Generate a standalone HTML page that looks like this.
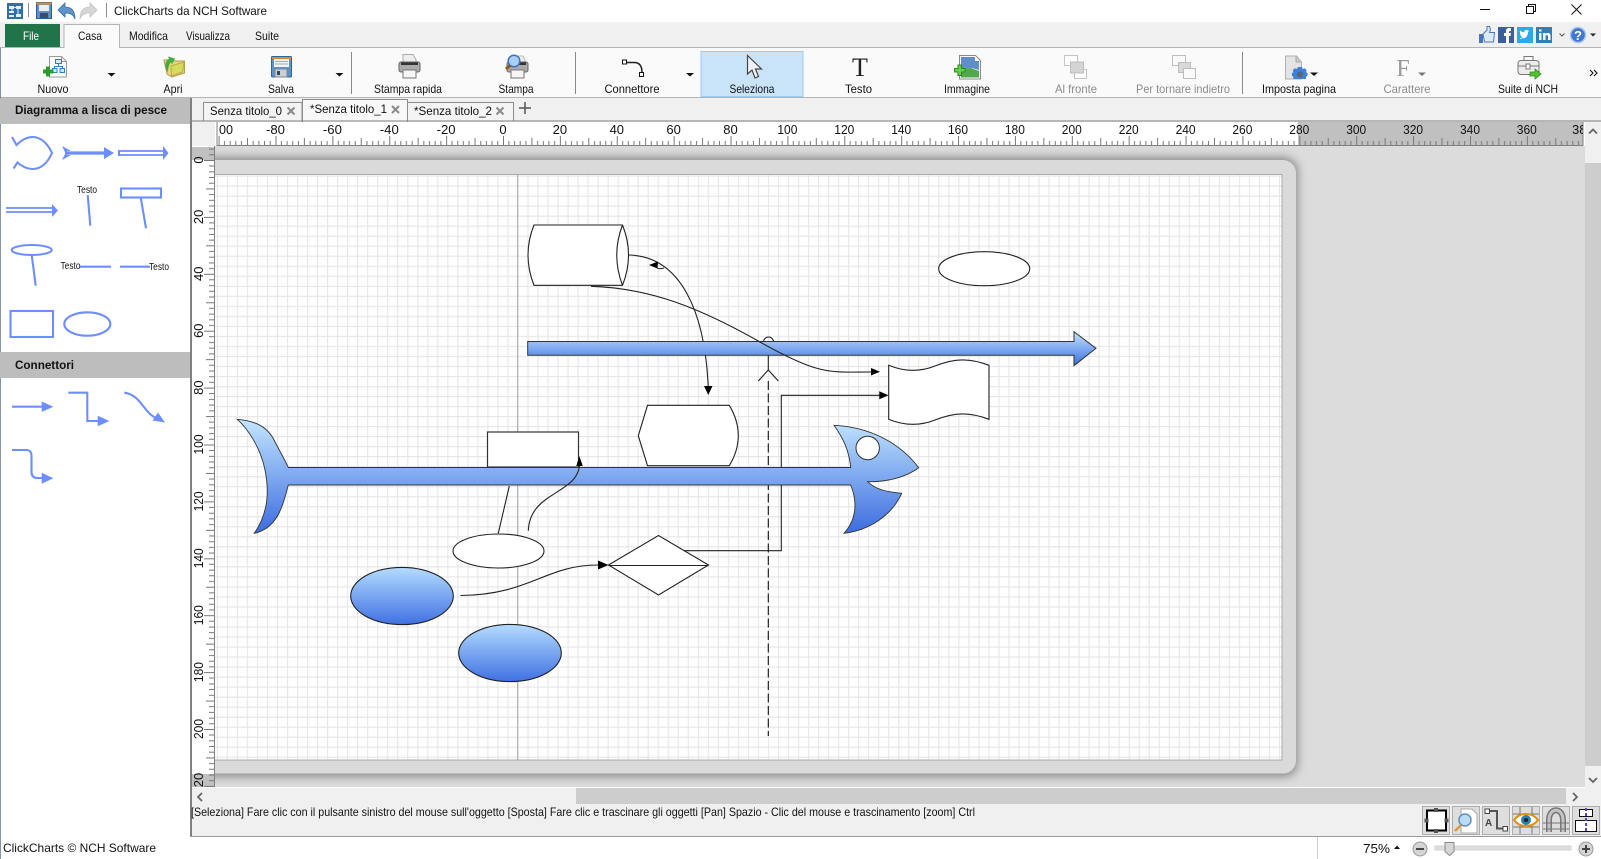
<!DOCTYPE html>
<html lang="it"><head><meta charset="utf-8"><title>ClickCharts da NCH Software</title>
<style>
html,body{margin:0;padding:0;background:#fff;overflow:hidden;width:1601px;height:859px}
svg{display:block}
text{font-family:"Liberation Sans",sans-serif;font-size:12px;fill:#111}
.d{fill:#8c8c8c}
.b{font-weight:bold}
.r{font-size:13px;fill:#111}
</style></head><body>
<svg width="1601" height="859" viewBox="0 0 1601 859" xmlns="http://www.w3.org/2000/svg">
<defs>
<linearGradient id="fg" x1="0" y1="0" x2="0" y2="1"><stop offset="0" stop-color="#c2e6ff"/><stop offset="1" stop-color="#3c6ce0"/></linearGradient>
<linearGradient id="el" x1="0" y1="0" x2="0" y2="1"><stop offset="0" stop-color="#b4dcff"/><stop offset="1" stop-color="#3f71e2"/></linearGradient>
<pattern id="grid" patternUnits="userSpaceOnUse" x="216.8" y="175.5" width="10.02" height="10.02"><path d="M.5 0V10.02M0 .5H10.02" stroke="#e7e7e7" stroke-width="1.3" fill="none"/></pattern>
<pattern id="ht" patternUnits="userSpaceOnUse" x="218.6" y="122" width="56.88" height="24"><path d="M.5 14V23M5.9 19V23M11.6 19V23M17.2 19V23M22.9 19V23M28.9 16V23M34.6 19V23M40.3 19V23M45.9 19V23M51.6 19V23" stroke="#777" fill="none"/></pattern>
<pattern id="vt" patternUnits="userSpaceOnUse" x="192" y="160" width="23" height="56.9"><path d="M12 .5H23M17 6H23M17 11.9H23M17 17.5H23M17 23.2H23M14 28.9H23M17 34.6H23M17 40.3H23M17 46H23M17 51.6H23" stroke="#777" fill="none"/></pattern>
<filter id="sh" x="-5%" y="-5%" width="110%" height="110%"><feGaussianBlur stdDeviation="4.5"/></filter>
<clipPath id="cv"><rect x="215" y="146" width="1370" height="641"/></clipPath>
<clipPath id="rl"><rect x="217" y="122" width="1366" height="24"/></clipPath>
</defs>

<!-- base -->
<rect width="1601" height="859" fill="#fff"/>
<rect y="22" width="1601" height="25" fill="#f0f0f0"/>
<rect y="47" width="1601" height="1" fill="#b4b4b4"/>
<rect y="48" width="1601" height="49" fill="#fafafa"/>
<rect y="97" width="1601" height="1" fill="#b4b4b4"/>
<rect x="0" y="48" width="1" height="811" fill="#1d3c63" opacity=".55"/>

<!-- title bar -->
<g>
<rect x="7" y="3" width="16" height="16" fill="#2f6fb0"/><path d="M9 6h5v3H9zM16 6h5v3h-5zM9 11h5v2H9zM16 14h5v3h-5zM9 15h5v2H9z" fill="#dff0ff"/><path d="M14 7.500h2M12 9v2M18 9v5" stroke="#dff0ff"/>
<rect x="28" y="3" width="1" height="14" fill="#8a8a8a"/>
<rect x="36.500" y="2.500" width="15" height="16" fill="#5e8fc4" stroke="#2d5f97"/><rect x="36.500" y="2.500" width="15" height="2" fill="#e58a2c"/><rect x="39" y="5" width="10" height="6" fill="#eee"/><rect x="40" y="13" width="8" height="5" fill="#3e4e62"/>
<path d="M58 10L65 3v4c6 0 10 3 10 12-2-5-5-6-10-6v4z" fill="#5f93cc" stroke="#3a6da6" stroke-width=".8"/>
<path d="M97 10L90 3v4c-6 0-10 3-10 12 2-5 5-6 10-6v4z" fill="#d6d6d6" stroke="#c4c4c4" stroke-width=".8"/>
<rect x="106" y="3" width="1" height="14" fill="#8a8a8a"/>
<text x="114" y="15" textLength="153" lengthAdjust="spacingAndGlyphs">ClickCharts da NCH Software</text>
<path d="M1480 9.500h10" stroke="#111"/>
<path d="M1526.500 6.500h7v7h-7zM1528.500 6.500v-2h7v7h-2" fill="none" stroke="#111"/>
<path d="M1571.500 4.500l10 10M1581.500 4.500l-10 10" stroke="#111"/>
</g>

<!-- menu row -->
<rect x="5" y="24" width="55" height="23" fill="#21744a"/>
<text x="31" y="40" text-anchor="middle" textLength="16" lengthAdjust="spacingAndGlyphs" style="fill:#fff">File</text>
<path d="M64 48V24.500H119.500V48" fill="#fafafa" stroke="#b4b4b4"/>
<text x="78" y="40" textLength="24" lengthAdjust="spacingAndGlyphs">Casa</text>
<text x="129" y="40" textLength="39" lengthAdjust="spacingAndGlyphs">Modifica</text>
<text x="186" y="40" textLength="44" lengthAdjust="spacingAndGlyphs">Visualizza</text>
<text x="255" y="40" textLength="24" lengthAdjust="spacingAndGlyphs">Suite</text>

<!-- social -->
<g>
<rect x="1479" y="34" width="4" height="9" fill="#4a76b8"/>
<path d="M1483 34l4-4v-3.500h2.500l1 3-1 3h5l-1 9.500h-9z" fill="#dbe9f8" stroke="#4c78b4"/>
<rect x="1498" y="27" width="16" height="16" fill="#3b5f9e"/><path d="M1506 43v-7h-2v-3h2v-2c0-2 1-3 3-3h2v3h-1c-1 0-1 .500-1 1v1h2l-.5 3h-1.500v7z" fill="#fff"/>
<rect x="1517" y="27" width="16" height="16" fill="#2ba9e8"/><path d="M1520 38c3 1 6 0 7-2s1-3 1-4l1.500-1.500-1.500.3c-1-1.500-4-1-4 1.500-2 0-3-1-4-2-.5 1.500 0 3 1 3.500l-1-.2c0 1.500 1 2.500 2 2.800h-1c.5 1 1 1.500 2 1.600-1 .8-2 1-3 1z" fill="#fff"/>
<rect x="1536" y="27" width="16" height="16" fill="#2f7fb8"/><path d="M1539 33h2.500v7H1539zM1539 29.500h2.500v2H1539zM1543 33h2.500v1c1-1.500 5-2 5 2v4H1548v-3.500c0-2-2.500-2-2.500 0V40H1543z" fill="#fff"/>
<path d="M1559.500 33.500l2.500 2.500 2.500-2.500" fill="none" stroke="#555"/>
<circle cx="1578" cy="35" r="7.500" fill="#3f78d0" stroke="#a9c3ea" stroke-width="1.500"/>
<text x="1578" y="40" text-anchor="middle" class="b" style="fill:#fff;font-size:13px">?</text>
<path d="M1590 33.500h6l-3 3z" fill="#222"/>
</g>

<!-- toolbar -->
<rect x="701" y="51.500" width="102" height="45" fill="#c9e3f9" stroke="#99ccf5"/>
<g fill="#111">
<path d="M107.500 73h8l-4 3.500zM335.500 73h8l-4 3.500zM686 73h8l-4 3.500zM1310 72.500h8l-4 3.500z"/>
</g>
<path d="M1418 72.500h8l-4 3.500z" fill="#777"/>
<rect x="351" y="52" width="1" height="42" fill="#8a8a8a"/>
<rect x="575" y="52" width="1" height="42" fill="#8a8a8a"/>
<rect x="1242" y="52" width="1" height="42" fill="#8a8a8a"/>

<!-- Nuovo -->
<path d="M49.500 56.500h12l5 5v15.500h-17z" fill="#fff" stroke="#9a9a9a"/><path d="M61.500 56.500v5h5" fill="none" stroke="#9a9a9a"/>
<path d="M55.500 59.500h6v4h-6zM52.500 68.500h4.500v4h-4.500zM60 68.500h4.500v4H60z" fill="#d8ebfb" stroke="#2a80c8"/><path d="M58.500 63.500v3M54.500 68.500v-2h8v2" fill="none" stroke="#2a80c8"/>
<path d="M46 66.500h4v3h3.500v4H50v3h-4v-3h-3v-4h3z" fill="#2e9a2e"/>
<!-- Apri -->
<path d="M164 60l8-.5 2 1.500h10.500v12L172 77l-5-3z" fill="#e6d67c" stroke="#b89a4c"/>
<path d="M171 66l13-4-1.500 10-11 4z" fill="#d6dc5c" stroke="#c0a850"/>
<path d="M168 72c-4-5-3-11 1-13l-1-2.500 7 2-3 6-1-2.500c-2 2-3 6-3 10z" fill="#3fae3f"/>
<!-- Salva -->
<rect x="271.500" y="56.500" width="20" height="20.500" rx="1" fill="#5f92c8" stroke="#30639c"/><rect x="272" y="57" width="19" height="2" fill="#e58a2c"/><rect x="274" y="59" width="15" height="8" fill="#f2f2f2"/><path d="M275 61.500h13M275 64h13" stroke="#aaa"/><rect x="275" y="69" width="12" height="8" fill="#c8d0d8" stroke="#7a8894"/><rect x="277" y="71" width="3" height="4" fill="#39454f"/>
<!-- Stampa rapida -->
<path d="M403 54.500h10l3 5v4h-13z" fill="#eee" stroke="#aaa"/><rect x="399" y="62" width="21" height="10" rx="2" fill="#aaa" stroke="#666"/><rect x="401" y="62.500" width="17" height="2.500" fill="#333"/><rect x="403" y="70" width="13" height="8" fill="#f6f6f6" stroke="#777"/>
<!-- Stampa -->
<path d="M512 56h11l2 5v4h-13z" fill="#efefef" stroke="#bbb"/><rect x="507" y="62" width="21" height="10" rx="2" fill="#aaa" stroke="#666"/><rect x="509" y="62.500" width="17" height="2.500" fill="#333"/><rect x="511" y="70" width="13" height="8" fill="#f6f6f6" stroke="#777"/>
<circle cx="514" cy="61" r="5.800" fill="#a9cff5" stroke="#3f74c4" stroke-width="1.500"/><path d="M510 65.500l-4 3.500" stroke="#8c5a1e" stroke-width="3"/>
<!-- Connettore -->
<path d="M627 62.500h7c6 0 8 4 8 10" fill="none" stroke="#222" stroke-width="1.500"/><rect x="622.500" y="60" width="4" height="4" fill="#fff" stroke="#111"/><rect x="639.500" y="72.500" width="4" height="4" fill="#fff" stroke="#111"/>
<!-- Seleziona -->
<path d="M747.500 55.500V74l4.500-4 3 8 3.500-1.500-3-7.500h6z" fill="#eef2f6" stroke="#444" stroke-width="1.200"/>
<!-- Testo -->
<text x="860" y="76" text-anchor="middle" style="font-family:'Liberation Serif',serif;font-size:26px;fill:#222">T</text>
<!-- Immagine -->
<path d="M959.500 55.500h16l5 5v18.500h-21z" fill="#fff" stroke="#888"/><path d="M961 57h14v4h4v9l-7-2-11 1z" fill="#5f8fc6"/><path d="M961 69l10-1 8 3v6.500h-18z" fill="#52a84c"/><path d="M958 65h3.500v3.500h3.500v3.500h-3.500v3.500H958V72h-3.500v-3.500H958z" fill="#66d24a" stroke="#2a8a1e"/>
<!-- Al fronte -->
<g fill="#fff" stroke="#c4c4c4"><rect x="1064.500" y="55.500" width="13" height="10"/><rect x="1074.500" y="69.500" width="12" height="9"/></g><rect x="1070.500" y="62" width="13" height="11" fill="#d4d4d4" stroke="#bdbdbd"/>
<!-- Per tornare indietro -->
<g fill="#fafafa" stroke="#bdbdbd"><rect x="1172.500" y="55.500" width="13" height="10"/><rect x="1178.500" y="62.500" width="12" height="10" fill="#d8d8d8"/><rect x="1183.500" y="68.500" width="12" height="10"/></g>
<!-- Imposta pagina -->
<path d="M1285.500 56h11l5 6v17h-16z" fill="#e4e4e4" stroke="#b0b0b0"/><path d="M1296 56v6h5" fill="#c8c8c8" stroke="#aaa"/>
<path d="M1298 67h4l.7 2 2-.8 2 2-.8 2 1.600.8v3l-1.600.8.300 2.200h-13l.3-2.200-1.600-.8v-3l1.600-.8-.8-2 2-2 2 .8z" fill="#3f7fd8"/><circle cx="1300" cy="74.500" r="3" fill="#5c6470"/>
<!-- Carattere -->
<text x="1403" y="76" text-anchor="middle" style="font-family:'Liberation Serif',serif;font-size:24px;fill:#999">F</text>
<!-- Suite -->
<rect x="1518" y="60.500" width="21" height="14" rx="3" fill="#ececec" stroke="#777"/><path d="M1524 60v-3.500h9V60M1518 66h21" fill="none" stroke="#777"/><rect x="1526" y="64" width="4" height="5" fill="#fff" stroke="#777"/>
<path d="M1530 72h5v-3l6 5-6 5v-3h-5z" fill="#52c22e" stroke="#2e8c1e" stroke-width=".8"/>
<path d="M1590 70l3 3-3 3M1594 70l3 3-3 3" fill="none" stroke="#111" stroke-width="1.100"/>

<!-- toolbar labels -->
<g text-anchor="middle">
<text x="53" y="93" textLength="31" lengthAdjust="spacingAndGlyphs">Nuovo</text>
<text x="173" y="93" textLength="19" lengthAdjust="spacingAndGlyphs">Apri</text>
<text x="281" y="93" textLength="26" lengthAdjust="spacingAndGlyphs">Salva</text>
<text x="408" y="93" textLength="68" lengthAdjust="spacingAndGlyphs">Stampa rapida</text>
<text x="516" y="93" textLength="35" lengthAdjust="spacingAndGlyphs">Stampa</text>
<text x="632" y="93" textLength="55" lengthAdjust="spacingAndGlyphs">Connettore</text>
<text x="752" y="93" textLength="45" lengthAdjust="spacingAndGlyphs">Seleziona</text>
<text x="858.500" y="93" textLength="27" lengthAdjust="spacingAndGlyphs">Testo</text>
<text x="967" y="93" textLength="46" lengthAdjust="spacingAndGlyphs">Immagine</text>
<text x="1076" y="93" textLength="42" lengthAdjust="spacingAndGlyphs" class="d">Al fronte</text>
<text x="1183" y="93" textLength="94" lengthAdjust="spacingAndGlyphs" class="d">Per tornare indietro</text>
<text x="1299" y="93" textLength="74" lengthAdjust="spacingAndGlyphs">Imposta pagina</text>
<text x="1407" y="93" textLength="47" lengthAdjust="spacingAndGlyphs" class="d">Carattere</text>
<text x="1528" y="93" textLength="60" lengthAdjust="spacingAndGlyphs">Suite di NCH</text>
</g>

<!-- tab strip -->
<rect x="190" y="98" width="1411" height="24" fill="#f0f0f0"/>
<path d="M203.500 121V102.500H302V121" fill="#f4f4f4" stroke="#8c8c8c"/>
<path d="M407 121V102.500H513.500V121" fill="#f4f4f4" stroke="#8c8c8c"/>
<path d="M302.500 122V99.500H407.500V122" fill="#f8f8f8" stroke="#8c8c8c"/>
<text x="210" y="115" textLength="72" lengthAdjust="spacingAndGlyphs">Senza titolo_0</text>
<text x="310" y="113" textLength="77" lengthAdjust="spacingAndGlyphs">*Senza titolo_1</text>
<text x="414" y="115" textLength="78" lengthAdjust="spacingAndGlyphs">*Senza titolo_2</text>
<path d="M287.500 107.500l7 7M294.500 107.500l-7 7M392 106l7 7M399 106l-7 7M496.500 107.500l7 7M503.500 107.500l-7 7" stroke="#8a8a8a" stroke-width="2" fill="none"/>
<path d="M525 102v12M519 108h12" stroke="#555" stroke-width="1.500"/>

<!-- left panel -->
<rect y="98" width="190" height="26" fill="#bdbdbd"/>
<text x="15" y="114" class="b" textLength="152" lengthAdjust="spacingAndGlyphs">Diagramma a lisca di pesce</text>
<rect y="352" width="190" height="26" fill="#bdbdbd"/>
<text x="15" y="369" class="b" textLength="59" lengthAdjust="spacingAndGlyphs">Connettori</text>
<rect x="190" y="98" width="2" height="738" fill="#808080"/>

<g fill="none" stroke="#6c8eff" stroke-width="2.100">
<path d="M12 137l4.500 8c5-5 10-8 16-8 8 0 15 6 19.500 16-4.500 10-11 16-19.500 16-6 0-11-3-15-6.500l-4 6"/>
<path d="M65 153h42" stroke-width="3.200"/>
<path d="M119 151h45M119 155h45" stroke-width="1.800"/><path d="M119 150v6"/>
<path d="M6 208h47M6 212h47" stroke-width="1.800"/>
<path d="M87.700 195l2.600 30.700M140.700 197.300l5.300 31"/>
<rect x="121" y="188.500" width="40" height="9"/>
<ellipse cx="31.700" cy="250" rx="20" ry="5"/><path d="M31.700 255l4 30.700"/>
<path d="M80 266.700h31M120 266.700h30"/>
<rect x="10.500" y="311" width="42.500" height="26"/>
<ellipse cx="87.300" cy="324" rx="23" ry="11.700"/>
<path d="M12 406.700h31M68.300 392.700H87.300V421H100M124.300 392.700c17 2 20 22 33 25.500M12 450h14c4 0 5.500 2 5.500 6v16c0 4 2 6 6 6H44"/>
</g>
<g fill="#6c8eff">
<path d="M62 146l3.500 7-3.500 7 9-5h-4v-4h4zM104 147l10 6-10 6zM163 146l5.500 7-5.500 7zM52 204l6 6.500-6 6.500zM41.700 401.500l11.700 5.200-11.700 5.200zM97.700 415.700l11.700 5.300-11.700 5.300zM165 422.500l-12.500-2 5.500-8zM41.700 472.800l11.700 5.500-11.700 5.500z"/>
</g>
<g>
<text x="77" y="193" textLength="20" lengthAdjust="spacingAndGlyphs" style="font-size:10px">Testo</text>
<text x="60.500" y="269" textLength="20" lengthAdjust="spacingAndGlyphs" style="font-size:10px">Testo</text>
<text x="149" y="270" textLength="20" lengthAdjust="spacingAndGlyphs" style="font-size:10px">Testo</text>
</g>

<!-- canvas -->
<rect x="215" y="146" width="1370" height="641" fill="#dcdcdc"/>
<g clip-path="url(#cv)">
<rect x="100" y="157" width="1198" height="620" rx="14" fill="#8e8e8e" filter="url(#sh)"/>
<rect x="100" y="160" width="1196" height="613.500" rx="13" fill="#dadada"/>
<rect x="100" y="174.500" width="1182" height="585.500" fill="#fff" stroke="#ababab"/>
<rect x="215" y="175" width="1066.500" height="584.500" fill="url(#grid)"/>
<path d="M517.700 175V760" stroke="#a6a6a6"/>

<!-- drawing layer below bars -->
<g fill="none" stroke="#222" stroke-width="1.100">
<path d="M534 225H622.500Q634.500 255 622.500 285.300H534Q522 255 534 225Z" fill="#fff"/>
<path d="M622.500 225Q611 255 622.500 285.300"/>
<path d="M628.300 255C680 256 705 310 708.300 388"/>
<path d="M763.500 342a5 5 0 0 1 10 0"/>
<path d="M768.300 355V370M758.300 381L768.300 370L778.300 381"/>
<path d="M768.300 381V736" stroke-dasharray="9 3.500" stroke="#111"/>
<path d="M647.500 405.300H729.300Q747.300 435.700 729.300 465.700H647.500L638.300 435.700Z" fill="#fff"/>
<path d="M888.700 365.300C905 372 920 372 935 366C955 358 970 358 989 365.300V419.300C970 412 955 412 935 420C920 426 905 426 888.700 419.300Z" fill="#fff"/>
<ellipse cx="984.200" cy="268.700" rx="45.500" ry="17" fill="#fff"/>
<path d="M509.300 486L498.300 533.300"/>
<ellipse cx="498.500" cy="551" rx="45.500" ry="17" fill="#fff"/>
<path d="M608.500 565L658.500 535.500L708.500 565L658.500 595Z" fill="#fff"/>
<path d="M608.500 565.500H708.500"/>
<path d="M683.500 550.700H781.300V395.300H880"/>
<path d="M460.500 595.500C530 595 545 565 598 565"/>
<ellipse cx="402" cy="596" rx="51.300" ry="28.600" fill="url(#el)"/>
<ellipse cx="510" cy="653" rx="51.300" ry="28.600" fill="url(#el)"/>
</g>
<path d="M704 386H712.500L708.300 395ZM879.300 391.300L888.500 395.300L879.300 399.300ZM598 560.500L608.500 565L598 569.500ZM649 265L658 261.500L657.500 268.500ZM871 368L880 371.700L871 375.500Z" fill="#000"/>
<path d="M657.500 268.500Q661 269 664 268" fill="none" stroke="#222"/>

<!-- top arrow bar -->
<path d="M527.700 341.500H1074V331.700L1096 348.300L1074 365.700V355.300H527.700Z" fill="url(#fg)" stroke="#333" stroke-width="1"/>

<!-- fish -->
<rect x="487.500" y="432" width="91" height="35" fill="#fff" stroke="#333" stroke-width="1.200"/>
<path d="M237.300 419.300C255 421 266 426 273 438C279 450 284 458 288.300 467.500H850.700C849 450 843 438 834 425.300C870 427 900 443 918.700 467.700C906 477 888 482 867.700 481.700C876 490 888 492 901.700 493.300C892 515 870 530 844 533.300C856 520 858 503 850.700 485H288.300C283 505 278 528 254.300 533.300C269 512 269 490 265 470C261 450 250 431 237.300 419.300Z" fill="url(#fg)" stroke="#333" stroke-width=".9"/>
<circle cx="867.700" cy="448" r="11.700" fill="#fff" stroke="#333"/>
<path d="M528.300 530.700C530 490 580 495 579.700 462" fill="none" stroke="#222" stroke-width="1.100"/>
<path d="M579.300 456L582.800 466H576.300Z" fill="#000"/>
<path d="M591 286.300C650 288 700 308 760 342S830 372 872 372" fill="none" stroke="#222" stroke-width="1.100"/>
</g>

<!-- rulers -->
<rect x="192" y="122" width="23" height="24" fill="#f0f0f0"/>
<rect x="217" y="122" width="1081" height="24" fill="#fff"/>
<rect x="1298" y="122" width="285" height="24" fill="#c0c0c0"/>
<rect x="217" y="122" width="1366" height="24" fill="url(#ht)"/>
<path d="M192 121H1601" stroke="#7c7c7c"/>
<path d="M217 122V146M1583 122V146M217 145.500H1583" stroke="#808080" fill="none"/>
<g clip-path="url(#rl)" text-anchor="middle">
<text x="226" y="134" class="r" textLength="14" lengthAdjust="spacingAndGlyphs">00</text>
<text x="275.500" y="134" class="r" textLength="19" lengthAdjust="spacingAndGlyphs">-80</text>
<text x="332.400" y="134" class="r" textLength="19" lengthAdjust="spacingAndGlyphs">-60</text>
<text x="389.300" y="134" class="r" textLength="19" lengthAdjust="spacingAndGlyphs">-40</text>
<text x="446.100" y="134" class="r" textLength="19" lengthAdjust="spacingAndGlyphs">-20</text>
<text x="503" y="134" class="r">0</text>
<text x="559.900" y="134" class="r">20</text>
<text x="616.800" y="134" class="r">40</text>
<text x="673.600" y="134" class="r">60</text>
<text x="730.500" y="134" class="r">80</text>
<text x="787.400" y="134" class="r" textLength="20" lengthAdjust="spacingAndGlyphs">100</text>
<text x="844.300" y="134" class="r" textLength="20" lengthAdjust="spacingAndGlyphs">120</text>
<text x="901.200" y="134" class="r" textLength="20" lengthAdjust="spacingAndGlyphs">140</text>
<text x="958" y="134" class="r" textLength="20" lengthAdjust="spacingAndGlyphs">160</text>
<text x="1014.900" y="134" class="r" textLength="20" lengthAdjust="spacingAndGlyphs">180</text>
<text x="1071.800" y="134" class="r" textLength="20" lengthAdjust="spacingAndGlyphs">200</text>
<text x="1128.700" y="134" class="r" textLength="20" lengthAdjust="spacingAndGlyphs">220</text>
<text x="1185.600" y="134" class="r" textLength="20" lengthAdjust="spacingAndGlyphs">240</text>
<text x="1242.400" y="134" class="r" textLength="20" lengthAdjust="spacingAndGlyphs">260</text>
<text x="1299.300" y="134" class="r" textLength="20" lengthAdjust="spacingAndGlyphs">280</text>
<text x="1356.200" y="134" class="r" textLength="20" lengthAdjust="spacingAndGlyphs">300</text>
<text x="1413.100" y="134" class="r" textLength="20" lengthAdjust="spacingAndGlyphs">320</text>
<text x="1470" y="134" class="r" textLength="20" lengthAdjust="spacingAndGlyphs">340</text>
<text x="1526.800" y="134" class="r" textLength="20" lengthAdjust="spacingAndGlyphs">360</text>
<text x="1572" y="134" class="r" style="text-anchor:start">38</text>
</g>

<rect x="192" y="146" width="23" height="641" fill="#fff"/>
<rect x="192" y="147" width="23" height="13" fill="#c0c0c0"/>
<rect x="192" y="774" width="23" height="13" fill="#c0c0c0"/>
<rect x="192" y="146" width="23" height="641" fill="url(#vt)"/>
<path d="M214.500 146V787" stroke="#808080"/>
<g text-anchor="middle">
<text transform="translate(203,160) rotate(-90)" class="r">0</text>
<text transform="translate(203,216.900) rotate(-90)" class="r">20</text>
<text transform="translate(203,273.800) rotate(-90)" class="r">40</text>
<text transform="translate(203,330.700) rotate(-90)" class="r">60</text>
<text transform="translate(203,387.600) rotate(-90)" class="r">80</text>
<text transform="translate(203,444.500) rotate(-90)" class="r" textLength="20" lengthAdjust="spacingAndGlyphs">100</text>
<text transform="translate(203,501.400) rotate(-90)" class="r" textLength="20" lengthAdjust="spacingAndGlyphs">120</text>
<text transform="translate(203,558.300) rotate(-90)" class="r" textLength="20" lengthAdjust="spacingAndGlyphs">140</text>
<text transform="translate(203,615.200) rotate(-90)" class="r" textLength="20" lengthAdjust="spacingAndGlyphs">160</text>
<text transform="translate(203,672.100) rotate(-90)" class="r" textLength="20" lengthAdjust="spacingAndGlyphs">180</text>
<text transform="translate(203,729) rotate(-90)" class="r" textLength="20" lengthAdjust="spacingAndGlyphs">200</text>
<text transform="translate(203,780) rotate(-90)" class="r">20</text>
</g>

<!-- vertical scrollbar -->
<rect x="1585" y="122" width="16" height="665" fill="#f0f0f0"/>
<rect x="1585" y="163" width="16" height="603" fill="#cdcdcd"/>
<path d="M1589 133.500l4-4 4 4M1589 778l4 4 4-4" fill="none" stroke="#666" stroke-width="1.800"/>

<!-- bottom area -->
<rect x="192" y="787" width="1409" height="49" fill="#f0f0f0"/>
<rect x="192" y="787" width="1393" height="1" fill="#fff"/>
<rect x="576" y="788" width="990" height="16" fill="#cdcdcd"/>
<path d="M202 793l-4 4 4 4M1573 793l4 4-4 4" fill="none" stroke="#666" stroke-width="1.800"/>
<text x="191" y="816" textLength="784" lengthAdjust="spacingAndGlyphs">[Seleziona] Fare clic con il pulsante sinistro del mouse sull'oggetto [Sposta] Fare clic e trascinare gli oggetti [Pan] Spazio - Clic del mouse e trascinamento [zoom] Ctrl</text>

<!-- bottom view buttons -->
<g fill="#dedede" stroke="#adadad">
<rect x="1422.500" y="806.500" width="27" height="28"/>
<rect x="1452.500" y="806.500" width="27" height="28"/>
<rect x="1482.500" y="806.500" width="27" height="28"/>
<rect x="1512.500" y="806.500" width="27" height="28"/>
<rect x="1542.500" y="806.500" width="27" height="28"/>
<rect x="1572.500" y="806.500" width="27" height="28"/>
</g>
<rect x="1427" y="810.500" width="19" height="20" fill="#fff" stroke="#000" stroke-width="2"/>
<path d="M1434 808h4v4h-4zM1434 829h4v4h-4zM1424.500 818.500h4v4h-4zM1444.500 818.500h4v4h-4z" fill="#555"/>
<path d="M1461 809h11l5 5v19h-16z" fill="#fff" stroke="#aaa"/>
<circle cx="1465" cy="820" r="6" fill="#bcdcf5" stroke="#5f8fbf" stroke-width="1.500"/><path d="M1461 825l-6 6" stroke="#d89a3c" stroke-width="2.500"/>
<path d="M1489 811H1497V828.500H1503" fill="none" stroke="#555" stroke-width="2"/>
<rect x="1485" y="809" width="4.500" height="4.500" fill="#fff" stroke="#444"/><rect x="1503" y="826.500" width="4.500" height="4.500" fill="#fff" stroke="#444"/>
<text x="1485" y="826" class="b" style="font-size:10px;fill:#444">A</text>
<path d="M1520 807v27M1532 807v27M1513 814h26M1513 827h26" stroke="#777"/>
<path d="M1514 820c6-8 18-8 24 0-6 8-18 8-24 0z" fill="#fff" stroke="#e0920e" stroke-width="2"/><circle cx="1526" cy="820" r="5" fill="#2f7fa8"/><circle cx="1526" cy="820" r="2" fill="#123"/>
<path d="M1549 832V820c0-13 14-13 14 0v12" fill="none" stroke="#777" stroke-width="6"/><path d="M1549 832V820c0-13 14-13 14 0v12" fill="none" stroke="#c4c4c4" stroke-width="3"/><path d="M1543 823h26M1543 829h26" stroke="#777"/>
<rect x="1579.500" y="809.500" width="13" height="7" fill="#fff" stroke="#111"/><rect x="1575.500" y="820.500" width="21" height="11" fill="#fff" stroke="#111"/>
<path d="M1586 808v25" stroke="#5a3fd0" stroke-width="2" stroke-dasharray="3 2"/>

<!-- status bar -->
<rect x="190" y="836" width="1411" height="1" fill="#9c9c9c"/>
<text x="3" y="852" textLength="153" lengthAdjust="spacingAndGlyphs">ClickCharts © NCH Software</text>
<rect x="1317" y="837" width="1" height="22" fill="#d0d0d0"/>
<text x="1363" y="853" textLength="27" lengthAdjust="spacingAndGlyphs" style="font-size:13px">75%</text>
<path d="M1394 849h6l-3-3.500z" fill="#111"/>
<circle cx="1420" cy="849" r="7" fill="#d4d4d4" stroke="#9a9a9a"/><path d="M1416 849h8" stroke="#444" stroke-width="2"/>
<rect x="1435" y="846" width="136" height="4" fill="#dedede" stroke="#d4d4d4"/>
<path d="M1445 842.500h9v9l-4.500 4-4.500-4z" fill="#d6d6d6" stroke="#8a8a8a"/>
<circle cx="1586" cy="849" r="7" fill="#d4d4d4" stroke="#9a9a9a"/><path d="M1582 849h8M1586 845v8" stroke="#444" stroke-width="2"/>
</svg>
</body></html>
